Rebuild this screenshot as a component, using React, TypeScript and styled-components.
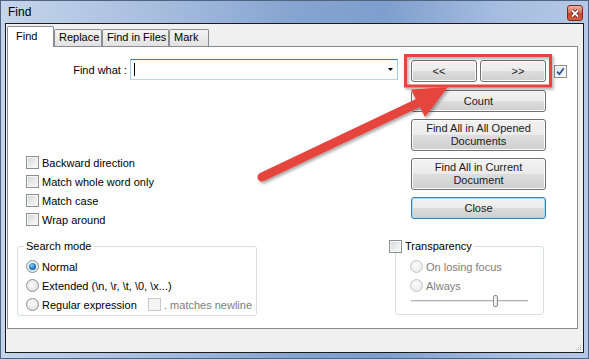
import styled, { createGlobalStyle } from "styled-components";

const GlobalStyle = createGlobalStyle`
  html, body {
    margin: 0;
    padding: 0;
    background: #fff;
  }
  body {
    font-family: "Liberation Sans", Arial, sans-serif;
    font-size: 11px;
    color: #000;
  }
  * {
    box-sizing: border-box;
  }
`;

const Window = styled.div`
  position: relative;
  width: 589px;
  height: 359px;
  display: flex;
  flex-direction: column;
  border: 1px solid #4f6383;
  background: linear-gradient(
    90deg,
    #c4d5eb 0%,
    #a9bfdf 25%,
    #86a4d0 50%,
    #7e9ecd 65%,
    #a6bde0 85%,
    #b4c9e5 100%
  );
`;

const TitleBar = styled.div`
  height: 22px;
  display: flex;
  align-items: center;
  padding-left: 7px;
`;

const Title = styled.span`
  font-size: 12px;
  color: #000;
`;

const CloseBox = styled.div`
  margin-left: auto;
  margin-right: 5px;
  align-self: flex-start;
  margin-top: 4px;
  width: 16px;
  height: 16px;
  border: 1px solid #7e2a1c;
  border-radius: 3px;
  background: linear-gradient(#eab0a0 0%, #d9735b 45%, #c8432a 55%, #d4604a 100%);
  display: flex;
  align-items: center;
  justify-content: center;
`;

const Client = styled.div`
  flex: 1;
  margin: 0 4px 5px 4px;
  border: 1px solid #1b1b1b;
  background: #f0f0f0;
  display: flex;
  flex-direction: column;
  padding: 2px 5px 0 1px;
`;

const TabBar = styled.div`
  height: 20px;
  display: flex;
  align-items: flex-end;
`;

const Tab = styled.div<{ $active?: boolean; $w: number }>`
  position: relative;
  z-index: ${(p) => (p.$active ? 2 : 1)};
  width: ${(p) => p.$w}px;
  height: ${(p) => (p.$active ? 21 : 17)}px;
  margin-bottom: ${(p) => (p.$active ? -1 : 0)}px;
  border: 1px solid #898c95;
  border-bottom: none;
  border-radius: 2px 2px 0 0;
  background: ${(p) => (p.$active ? "#fff" : "linear-gradient(#f3f3f3, #e2e2e2)")};
  padding: ${(p) => (p.$active ? "3px 0 0 8px" : "1px 0 0 4px")};
  line-height: 13px;
  white-space: nowrap;
`;

const Panel = styled.div`
  position: relative;
  z-index: 1;
  height: 283px;
  border: 1px solid #898c95;
  background: #fff;
  padding-left: 9px;
  display: flex;
  flex-direction: column;
`;

const TopSection = styled.div`
  display: grid;
  grid-template-columns: 388px 1fr;
  height: 182px;
`;

const LeftColumn = styled.div`
  display: flex;
  flex-direction: column;
`;

const FindRow = styled.div`
  margin-top: 12px;
  height: 21px;
  display: flex;
  align-items: center;
`;

const FieldLabel = styled.span`
  width: 113px;
  text-align: right;
  padding-right: 3px;
`;

const Combo = styled.div`
  width: 268px;
  height: 21px;
  border: 1px solid;
  border-color: #3d7bad #a4c9e3 #b7d9ed #a4c9e3;
  background: #fff;
  display: flex;
  align-items: center;
  padding: 0 4px 0 3px;
`;

const Caret = styled.span`
  width: 1px;
  height: 13px;
  background: #000;
`;

const DropArrow = styled.svg`
  margin-left: auto;
`;

const OptionList = styled.div`
  margin-top: 73px;
  padding-left: 9px;
  display: flex;
  flex-direction: column;
`;

const OptionRow = styled.label<{ $disabled?: boolean }>`
  height: 19px;
  display: flex;
  align-items: center;
  gap: 3px;
  color: ${(p) => (p.$disabled ? "#7d7d7d" : "#000")};
  white-space: nowrap;
`;

const OptionText = styled.span<{ $w?: number; $muted?: boolean }>`
  ${(p) => (p.$w ? `width: ${p.$w}px;` : "")}
  ${(p) => (p.$muted ? "color: #7d7d7d;" : "")}
`;

const Box = styled.span<{ $checked?: boolean; $disabled?: boolean }>`
  flex: none;
  width: 13px;
  height: 13px;
  border: 1px solid ${(p) => (p.$disabled ? "#c9c9c9" : "#8e8f8f")};
  background: ${(p) =>
    p.$disabled
      ? "#f4f4f4"
      : p.$checked
      ? "linear-gradient(135deg, #dfe6ef, #f8fafc)"
      : "linear-gradient(135deg, #cfd1d4 0%, #eeeeef 60%, #f8f8f8 100%)"};
  box-shadow: inset 0 0 0 1px ${(p) => (p.$disabled ? "#f4f4f4" : "#f7f7f7")};
  display: flex;
  align-items: center;
  justify-content: center;
`;

const Radio = styled.span<{ $checked?: boolean; $disabled?: boolean }>`
  flex: none;
  width: 13px;
  height: 13px;
  border-radius: 50%;
  border: 1px solid ${(p) => (p.$disabled ? "#c6c6c6" : "#8e8f8f")};
  background: ${(p) =>
    p.$disabled
      ? "radial-gradient(circle at 45% 40%, #fbfbfb, #e6e6e6)"
      : "radial-gradient(circle at 45% 40%, #ffffff, #d6d6d6)"};
  display: flex;
  align-items: center;
  justify-content: center;

  &::after {
    content: "";
    display: ${(p) => (p.$checked ? "block" : "none")};
    width: 7px;
    height: 7px;
    border-radius: 50%;
    background: radial-gradient(circle at 40% 35%, #8fd6fb 0%, #2a86c8 45%, #0b3f73 100%);
  }
`;

const RightColumn = styled.div`
  padding: 13px 0 0 6px;
  display: flex;
  flex-direction: column;
  gap: 7px;
`;

const PairRow = styled.div`
  display: flex;
  align-items: center;
  margin-bottom: 1px;
`;

const Pair = styled.div`
  width: 135px;
  display: flex;
  gap: 3px;
`;

const Button = styled.button<{ $h?: number; $focus?: boolean; $pad?: string }>`
  width: 135px;
  flex: ${(p) => (p.$pad ? 1 : "none")};
  height: ${(p) => p.$h ?? 22}px;
  border: 1px solid ${(p) => (p.$focus ? "#3c7fb1" : "#707070")};
  border-radius: 3px;
  background: linear-gradient(#f2f2f2 0%, #ebebeb 50%, #dddddd 51%, #cfcfcf 100%);
  box-shadow: inset 0 0 0 1px ${(p) => (p.$focus ? "#9fdcf8" : "#fbfbfb")};
  font-family: inherit;
  font-size: 11px;
  font-weight: 400;
  color: #1a1a1a;
  line-height: 13px;
  padding: ${(p) => p.$pad ?? "0 4px"};
`;

const CheckAside = styled.div`
  margin-left: 8px;
`;

const BottomSection = styled.div`
  margin-top: 10px;
  display: flex;
  align-items: flex-start;
`;

const Group = styled.fieldset<{ $w: number; $left?: number; $padLeft: number }>`
  margin: 0 0 0 ${(p) => p.$left ?? 0}px;
  width: ${(p) => p.$w}px;
  border: 1px solid #d5dfe5;
  border-radius: 3px;
  padding: 4px 0 1px ${(p) => p.$padLeft}px;
  display: flex;
  flex-direction: column;
`;

const Legend = styled.legend<{ $shift: number }>`
  margin-left: ${(p) => p.$shift}px;
  padding: 0 2px;
  line-height: 14px;
  display: flex;
  align-items: center;
  gap: 3px;
`;

const SliderRow = styled.div`
  height: 14px;
  margin: 0 0 4px 1px;
  position: relative;
  width: 117px;
`;

const Track = styled.div`
  margin-top: 5px;
  height: 2px;
  border-top: 1px solid #b2b2b2;
  border-bottom: 1px solid #e9e9e9;
`;

const Thumb = styled.div`
  position: absolute;
  top: 0;
  width: 5px;
  height: 12px;
  border: 1px solid #8c8c8c;
  border-radius: 2px;
  background: linear-gradient(90deg, #fafafa, #e2e2e2);
`;

const StatusStrip = styled.div`
  flex: 1;
  display: flex;
  justify-content: flex-end;
  align-items: flex-end;
  padding: 0 0 1px 0;
  margin-right: -4px;
`;

const Annotation = styled.svg`
  position: absolute;
  left: -1px;
  top: -1px;
  pointer-events: none;
  z-index: 5;
`;

function CheckMark() {
  return (
    <svg width="9" height="9" viewBox="0 0 9 9">
      <path d="M1.2 4.6 L3.4 7.2 L7.8 1.2" stroke="#2b4f93" strokeWidth="1.7" fill="none" />
    </svg>
  );
}

const leftOptions = ["Backward direction", "Match whole word only", "Match case", "Wrap around"];

export default function App() {
  const opacity = 0.7;
  return (
    <>
      <GlobalStyle />
      <Window>
        <TitleBar>
          <Title>Find</Title>
          <CloseBox>
            <svg width="10" height="9" viewBox="0 0 10 9">
              <path d="M2 1.5 L8 7.5 M8 1.5 L2 7.5" stroke="#5b1a0f" strokeWidth="3.4" />
              <path d="M2 1.5 L8 7.5 M8 1.5 L2 7.5" stroke="#fff" strokeWidth="1.8" />
            </svg>
          </CloseBox>
        </TitleBar>
        <Client>
          <TabBar>
            <Tab $active $w={47}>Find</Tab>
            <Tab $w={48}>Replace</Tab>
            <Tab $w={67}>Find in Files</Tab>
            <Tab $w={40}>Mark</Tab>
          </TabBar>
          <Panel>
            <TopSection>
              <LeftColumn>
                <FindRow>
                  <FieldLabel>Find what :</FieldLabel>
                  <Combo>
                    <Caret />
                    <DropArrow width="5" height="3" viewBox="0 0 5 3">
                      <path d="M0 0 H5 L2.5 3 Z" fill="#000" />
                    </DropArrow>
                  </Combo>
                </FindRow>
                <OptionList>
                  {leftOptions.map((o) => (
                    <OptionRow key={o}>
                      <Box />
                      <OptionText>{o}</OptionText>
                    </OptionRow>
                  ))}
                </OptionList>
              </LeftColumn>
              <RightColumn>
                <PairRow>
                  <Pair>
                    <Button $pad="0 10px 0 0">&lt;&lt;</Button>
                    <Button $pad="0 0 0 10px">&gt;&gt;</Button>
                  </Pair>
                  <CheckAside>
                    <Box $checked>
                      <CheckMark />
                    </Box>
                  </CheckAside>
                </PairRow>
                <Button>Count</Button>
                <Button $h={32}>
                  Find All in All Opened
                  <br />
                  Documents
                </Button>
                <Button $h={32}>
                  Find All in Current
                  <br />
                  Document
                </Button>
                <Button $focus>Close</Button>
              </RightColumn>
            </TopSection>
            <BottomSection>
              <Group $w={240} $padLeft={8}>
                <Legend $shift={-2}>Search mode</Legend>
                <OptionRow>
                  <Radio $checked />
                  <OptionText>Normal</OptionText>
                </OptionRow>
                <OptionRow>
                  <Radio />
                  <OptionText>Extended (\n, \r, \t, \0, \x...)</OptionText>
                </OptionRow>
                <OptionRow>
                  <Radio />
                  <OptionText $w={103}>Regular expression</OptionText>
                  <Box $disabled />
                  <OptionText $muted>. matches newline</OptionText>
                </OptionRow>
              </Group>
              <Group $w={149} $left={138} $padLeft={14}>
                <Legend $shift={-23}>
                  <Box />
                  <span>Transparency</span>
                </Legend>
                <OptionRow $disabled>
                  <Radio $disabled />
                  <OptionText>On losing focus</OptionText>
                </OptionRow>
                <OptionRow $disabled>
                  <Radio $disabled />
                  <OptionText>Always</OptionText>
                </OptionRow>
                <SliderRow>
                  <Track />
                  <Thumb style={{ left: `${opacity * 117}px` }} />
                </SliderRow>
              </Group>
            </BottomSection>
          </Panel>
          <StatusStrip>
            <svg width="6" height="6" viewBox="0 0 6 6">
              <rect x="4" y="0" width="1" height="1" fill="#a8a8a8" />
              <rect x="2" y="2" width="1" height="1" fill="#a8a8a8" />
              <rect x="4" y="2" width="1" height="1" fill="#a8a8a8" />
              <rect x="0" y="4" width="1" height="1" fill="#a8a8a8" />
              <rect x="2" y="4" width="1" height="1" fill="#a8a8a8" />
              <rect x="4" y="4" width="1" height="1" fill="#a8a8a8" />
            </svg>
          </StatusStrip>
        </Client>
        <Annotation width="589" height="359" viewBox="0 0 589 359">
          <defs>
            <filter id="shade" x="-10%" y="-10%" width="130%" height="140%">
              <feDropShadow dx="1.5" dy="2" stdDeviation="1.5" floodColor="#000" floodOpacity="0.35" />
            </filter>
          </defs>
          <g filter="url(#shade)">
            <rect x="405.5" y="55.5" width="145" height="30.5" fill="none" stroke="#e5443e" strokeWidth="3" />
            <line x1="262" y1="177" x2="420" y2="102" stroke="#e5443e" strokeWidth="9" strokeLinecap="round" />
            <polygon points="448,87 411,89.5 425,117" fill="#e5443e" />
          </g>
        </Annotation>
      </Window>
    </>
  );
}
